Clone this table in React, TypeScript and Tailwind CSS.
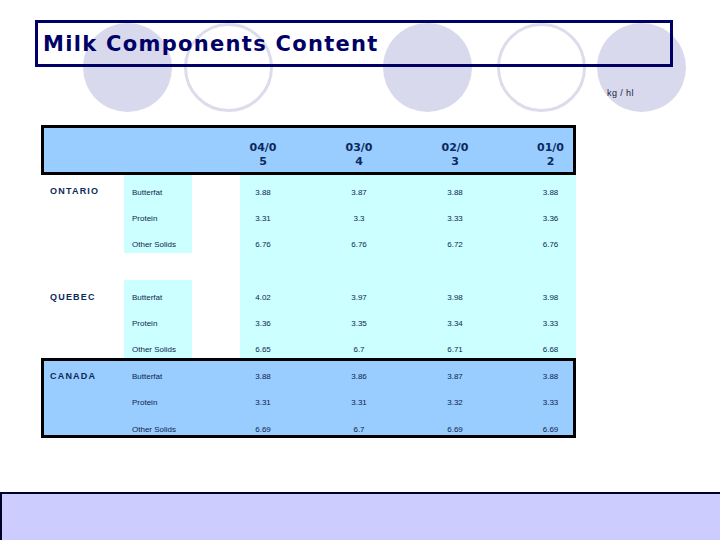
const years = [
  ['04/0', '5'],
  ['03/0', '4'],
  ['02/0', '3'],
  ['01/0', '2'],
];

const regions = [
  {
    name: 'ONTARIO',
    rows: [
      { label: 'Butterfat', values: ['3.88', '3.87', '3.88', '3.88'] },
      { label: 'Protein', values: ['3.31', '3.3', '3.33', '3.36'] },
      { label: 'Other Solids', values: ['6.76', '6.76', '6.72', '6.76'] },
    ],
  },
  {
    name: 'QUEBEC',
    rows: [
      { label: 'Butterfat', values: ['4.02', '3.97', '3.98', '3.98'] },
      { label: 'Protein', values: ['3.36', '3.35', '3.34', '3.33'] },
      { label: 'Other Solids', values: ['6.65', '6.7', '6.71', '6.68'] },
    ],
  },
];

const canada = [
  { label: 'Butterfat', values: ['3.88', '3.86', '3.87', '3.88'], h: 'h-[26px] pt-[11px]' },
  { label: 'Protein', values: ['3.31', '3.31', '3.32', '3.33'], h: 'h-[26px] pt-[11px]' },
  { label: 'Other Solids', values: ['6.69', '6.7', '6.69', '6.69'], h: 'h-[22px] pt-[12px]' },
];

const circles = [
  { left: 'left-[83px]', filled: true },
  { left: 'left-[184px]', filled: false },
  { left: 'left-[383px]', filled: true },
  { left: 'left-[497px]', filled: false },
  { left: 'left-[597px]', filled: true },
];

const regionLabel =
  "font-['Liberation_Sans',Arial,sans-serif] font-bold text-[9px] leading-[10px] tracking-[1.2px] text-[#0b2a5b]";
const small = "font-['Liberation_Sans',Arial,sans-serif] text-[8px] leading-[10px] text-[#0d1f4d]";

function Values({ values }: { values: string[] }) {
  return (
    <div className="grid grid-cols-[46px_46px_46px_45px] gap-x-[50px]">
      {values.map((v, i) => (
        <div key={i} className={`${small} text-center`}>
          {v}
        </div>
      ))}
    </div>
  );
}

const App = () => {
  return (
    <div className="relative w-[720px] h-[540px] overflow-hidden bg-white flex flex-col">
      {circles.map((c, i) => (
        <div
          key={i}
          className={`absolute top-[23px] ${c.left} w-[89px] h-[89px] rounded-full ${
            c.filled ? 'bg-[#d9d9ee]' : 'border-[3px] border-[#dddcea]'
          }`}
        />
      ))}

      <div className="relative pt-[20px] pl-[35px]">
        <div className="w-[638px] h-[47px] border-[3px] border-[#000066] pl-[5px] pt-[11px]">
          <h1 className="font-['DejaVu_Sans',Verdana,sans-serif] font-bold text-[21px] leading-[21px] tracking-[1.3px] text-[#000066]">
            Milk Components Content
          </h1>
        </div>
      </div>

      <div className="relative mt-[21px] pl-[607px] font-['Liberation_Sans',Arial,sans-serif] text-[9px] leading-[11px] tracking-[0.4px] text-[#1a1a3a]">
        kg / hl
      </div>

      <div className="relative mt-[26px] pl-[41px]">
        <div className="w-[535px]">
          <div className="h-[50px] bg-[#99ccff] border-[3px] border-black flex items-end pl-[196px] pb-[3px]">
            <div className="grid grid-cols-[46px_46px_46px_45px] gap-x-[50px]">
              {years.map(([a, b], i) => (
                <div
                  key={i}
                  className="text-center font-['DejaVu_Sans',Verdana,sans-serif] font-bold text-[11px] leading-[14px] text-[#0b2a5b]"
                >
                  {a}
                  <br />
                  {b}
                </div>
              ))}
            </div>
          </div>

          {regions.map((r, ri) => (
            <div key={r.name}>
              {ri > 0 && (
                <div className="flex h-[27px]">
                  <div className="w-[199px]" />
                  <div className="w-[336px] bg-[#ccffff]" />
                </div>
              )}
              {r.rows.map((row, i) => (
                <div key={row.label} className="flex h-[26px]">
                  <div className={`w-[83px] pl-[9px] ${ri === 0 ? 'pt-[11px]' : 'pt-[12px]'}`}>
                    {i === 0 && <div className={regionLabel}>{r.name}</div>}
                  </div>
                  <div className={`w-[68px] bg-[#ccffff] pl-[8px] pt-[13px] ${small}`}>{row.label}</div>
                  <div className="w-[48px]" />
                  <div className="w-[336px] bg-[#ccffff] pt-[13px]">
                    <Values values={row.values} />
                  </div>
                </div>
              ))}
            </div>
          ))}

          <div className="bg-[#99ccff] border-[3px] border-black">
            {canada.map((row, i) => (
              <div key={row.label} className={`flex ${row.h.split(' ')[0]}`}>
                <div className="w-[80px] pl-[6px] pt-[10px]">
                  {i === 0 && <div className={regionLabel}>CANADA</div>}
                </div>
                <div className={`w-[68px] pl-[8px] ${row.h.split(' ')[1]} ${small}`}>{row.label}</div>
                <div className="w-[48px]" />
                <div className={`w-[333px] ${row.h.split(' ')[1]}`}>
                  <Values values={row.values} />
                </div>
              </div>
            ))}
          </div>
        </div>
      </div>

      <div className="relative mt-auto h-[48px] w-[724px] bg-[#ccccff] border-t-2 border-l-2 border-[#000022]" />
    </div>
  );
};

export default App;
